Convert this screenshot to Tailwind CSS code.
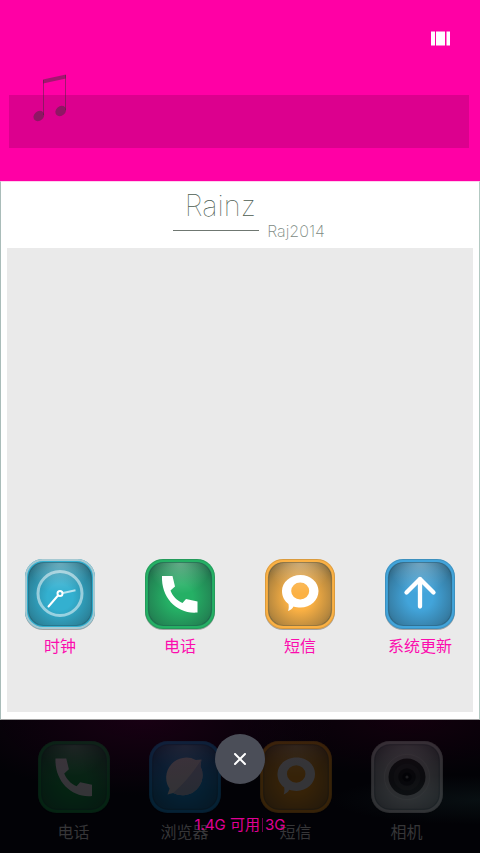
<!DOCTYPE html>
<html lang="zh-CN">
<head>
<meta charset="utf-8">
<meta name="viewport" content="width=device-width, initial-scale=1">
<title>Rainz</title>
<script src="https://cdn.jsdelivr.net/npm/@tailwindcss/browser@4"></script>
</head>
<body class="flex min-h-screen flex-col bg-black font-['Inter','Noto_Sans_CJK_SC',sans-serif]">
<svg class="absolute size-0" aria-hidden="true">
  <defs>
    <radialGradient id="shade" cx=".5" cy=".55" r=".68">
      <stop offset=".3" stop-color="#1c2a30" stop-opacity="0"/>
      <stop offset=".75" stop-color="#1c2a30" stop-opacity=".3"/>
      <stop offset="1" stop-color="#1c2a30" stop-opacity=".55"/>
    </radialGradient>
    <radialGradient id="gloss" cx=".5" cy="0" r=".5">
      <stop offset="0" stop-color="#fff" stop-opacity=".3"/>
      <stop offset="1" stop-color="#fff" stop-opacity="0"/>
    </radialGradient>
    <g id="tile">
      <rect x="1" y="2" width="70" height="70" rx="18" fill="#000" opacity=".3"/>
      <rect x="1" y="1" width="70" height="70" rx="18" fill="currentColor"/>
      <rect x="1.500" y="1.500" width="69" height="69" rx="17.500" fill="none" stroke="#222" stroke-opacity=".15"/>
      <rect x="4.500" y="4.500" width="63" height="63" rx="15" fill="url(#shade)"/>
      <rect x="4.500" y="4.500" width="63" height="63" rx="15" fill="url(#gloss)" stroke="#17323c" stroke-opacity=".35" stroke-width="1.200"/>
    </g>
    <path id="handset" d="M18 18H28.500L31 28.500 26.500 32.500C28.500 38 33 42.500 38.500 45L42 41 53.500 43.500V54.500C33.500 56.500 17 40 18 18Z"/>
    <path id="bubble" fill-rule="evenodd" d="M36.500 17C46.500 17 54.500 24 54.500 33S46.500 49.500 36.500 49.500C34 49.500 31.500 49.200 29.500 48.500 28.500 50.500 26.500 52 24 53 25 50.500 24.800 48.500 24.500 46 20.500 43 18 38.500 18 33 18 24 26.500 17 36.500 17ZM36.200 24.500A9 8.500 0 1 0 36.200 41.500 9 8.500 0 1 0 36.200 24.500Z"/>
  </defs>
</svg>

<header class="relative h-[181px] shrink-0 bg-[#ff00a5] pr-[11px] pl-[9px]">
  <div class="flex h-[95px] items-start justify-end pt-[31px] pr-[18px]">
    <button type="button" aria-label="后台任务" class="block">
      <svg class="h-[15px] w-5" viewBox="0 0 20 15" fill="#fff" aria-hidden="true"><path d="M0 .5h4v14H0zM5 .5h9v14H5zM15.500 .5h3.500v14h-3.500z"/></svg>
    </button>
  </div>
  <div class="h-[53px] bg-[#dc008e]"></div>
  <svg class="absolute top-[72px] left-8 h-[52px] w-9" viewBox="0 0 36 52" aria-hidden="true">
    <g fill="#303030" fill-opacity=".45">
      <path d="M11 7.500 34 2.500V6.500L11 11.500Z"/>
      <ellipse cx="6.800" cy="44" rx="5.700" ry="4.700" transform="rotate(-40 6.800 44)"/>
      <ellipse cx="28.700" cy="39" rx="5.700" ry="4.700" transform="rotate(-40 28.700 39)"/>
    </g>
    <path d="M11.500 8V43M33.500 3V38" stroke="#303030" stroke-opacity=".45"/>
  </svg>
</header>

<main class="flex grow flex-col border border-[#a9bcb9] border-r-[#b3c9c2] border-t-[#ffd0ee] border-b-[#a0a0a0] bg-white px-[6px] pb-[7px]">
  <div class="flex h-[66px] justify-center pl-[18px]">
    <div class="flex w-[86px] flex-col items-center">
      <h1 class="mt-[6px] pl-2 text-[29px] leading-9 font-thin text-[#4c5c50]">Rainz</h1>
      <div class="mt-[6px] h-px w-full bg-[#6f7771]"></div>
    </div>
    <p class="mt-[39px] ml-2 text-[16px] leading-5 font-extralight text-[#7c897f]">Raj2014</p>
  </div>
  <div class="flex grow flex-col justify-end bg-[#eaeaea] pb-[54px]">
    <nav class="-mx-[7px] grid grid-cols-4 text-[16px] leading-6 text-[#fc0cae]">
      <a href="#" class="flex flex-col items-center gap-1">
        <svg class="size-[72px] text-[#33b0d0]" viewBox="0 0 72 72" aria-hidden="true">
          <use href="#tile"/>
          <rect x="2" y="2" width="68" height="68" rx="17" fill="none" stroke="#a6c9d2" stroke-width="2"/>
          <circle cx="36" cy="35.500" r="22" fill="none" stroke="#fff" stroke-opacity=".5" stroke-width="3"/>
          <path d="M39 35 51.500 32.300" stroke="#fff" stroke-opacity=".65" stroke-width="2"/>
          <path d="M34 37.500 24.500 48.500" stroke="#fff" stroke-width="2" stroke-linecap="round"/>
          <circle cx="36" cy="35.500" r="2.500" fill="none" stroke="#fff" stroke-width="2"/>
        </svg>
        <span>时钟</span>
      </a>
      <a href="#" class="flex flex-col items-center gap-1">
        <svg class="size-[72px] text-[#25b065]" viewBox="0 0 72 72" aria-hidden="true"><use href="#tile"/><use href="#handset" fill="#fff"/></svg>
        <span>电话</span>
      </a>
      <a href="#" class="flex flex-col items-center gap-1">
        <svg class="size-[72px] text-[#fbb144]" viewBox="0 0 72 72" aria-hidden="true"><use href="#tile"/><use href="#bubble" fill="#fff"/></svg>
        <span>短信</span>
      </a>
      <a href="#" class="flex flex-col items-center gap-1">
        <svg class="size-[72px] text-[#42a4da]" viewBox="0 0 72 72" aria-hidden="true"><use href="#tile"/><path d="M36 48.500V21M22.500 34.500 36 21 49.500 34.500" fill="none" stroke="#fff" stroke-width="4.300" stroke-linecap="round" stroke-linejoin="round"/></svg>
        <span>系统更新</span>
      </a>
    </nav>
  </div>
</main>

<footer class="relative h-[133px] shrink-0 bg-[#020206] bg-[radial-gradient(ellipse_at_30%_0%,#180013_0%,transparent_40%),radial-gradient(ellipse_at_85%_0%,#12000d_0%,transparent_30%),radial-gradient(ellipse_at_100%_60%,#080f12_0%,transparent_22%)] px-[18px] pt-5">
  <nav class="grid grid-cols-4 text-[16px] leading-6 text-[#363638]">
    <a href="#" class="flex flex-col items-center gap-[6px]">
      <svg class="size-[74px] text-[#109840] opacity-22" viewBox="0 0 72 72" aria-hidden="true"><use href="#tile"/><use href="#handset" fill="#e6e6e6"/></svg>
      <span>电话</span>
    </a>
    <a href="#" class="flex flex-col items-center gap-[6px]">
      <svg class="size-[74px] text-[#1090d8] opacity-22" viewBox="0 0 72 72" aria-hidden="true">
        <use href="#tile"/>
        <path d="M52 19 51 25.500A19.500 19.500 0 0 1 24.500 51.500L19 53 21 47.500A19.500 19.500 0 0 1 46.500 19.500Z" fill="#dcdcdc"/>
        <path d="M52 19 51 25.500A19.500 19.500 0 0 1 24.500 51.500Q40 38 52 19Z" fill="#adbbd4"/>
      </svg>
      <span>浏览器</span>
    </a>
    <a href="#" class="flex flex-col items-center gap-[6px]">
      <svg class="size-[74px] text-[#f09610] opacity-22" viewBox="0 0 72 72" aria-hidden="true"><use href="#tile"/><use href="#bubble" fill="#e6e6e6"/></svg>
      <span>短信</span>
    </a>
    <a href="#" class="flex flex-col items-center gap-[6px]">
      <svg class="size-[74px] text-[#cfcfcf] opacity-22" viewBox="0 0 72 72" aria-hidden="true">
        <use href="#tile"/>
        <circle cx="36" cy="36" r="22" fill="#b8b8b8" stroke="#d8d8d8" stroke-width=".6"/>
        <circle cx="36" cy="36" r="18" fill="#2b2b2b"/>
        <circle cx="36" cy="36" r="13" fill="#3a3a3a"/>
        <circle cx="36" cy="36" r="8.500" fill="#1a1a1a"/>
        <circle cx="36" cy="36" r="4.500" fill="#070707"/>
        <circle cx="36" cy="36" r="1.500" fill="#777"/>
      </svg>
      <span>相机</span>
    </a>
  </nav>
  <button type="button" aria-label="清除全部" class="absolute top-[14px] left-1/2 flex size-[50px] -translate-x-1/2 items-center justify-center rounded-full bg-[#4b4e58]">
    <svg class="size-3" viewBox="0 0 12 12" fill="none" stroke="#fff" stroke-width="2" stroke-linecap="round" aria-hidden="true"><path d="M1 1 11 11M11 1 1 11"/></svg>
  </button>
  <p class="absolute inset-x-0 top-[93px] flex items-center justify-center gap-[2px] text-[15px] leading-6 text-[#e00094]">
    <span>1.4G 可用</span><span class="h-[14px] w-px bg-[#700049]"></span><span>3G</span>
  </p>
</footer>
</body>
</html>
